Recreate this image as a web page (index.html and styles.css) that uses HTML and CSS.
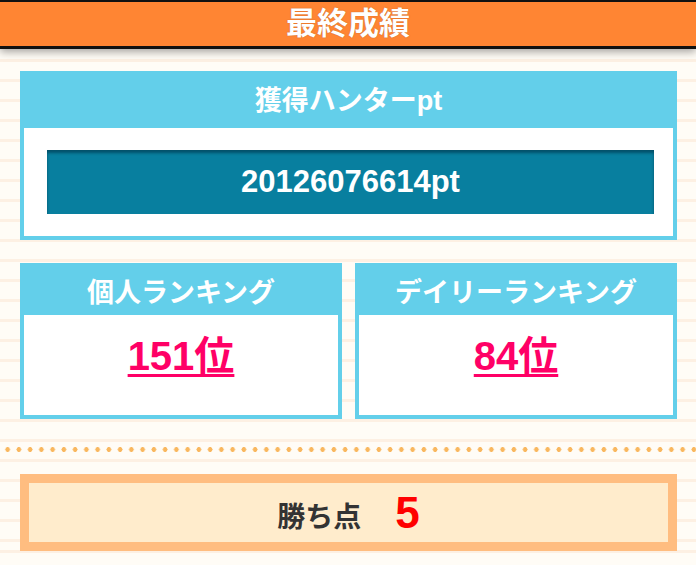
FILE: index.html
```html
<!DOCTYPE html>
<html lang="ja">
<head>
  <meta charset="UTF-8">
  <meta name="viewport" content="width=device-width, initial-scale=1.0">
  <title>最終成績</title>
  <link rel="stylesheet" href="styles.css">
</head>
<body>
  <header class="page-title">
    <h1>最終成績</h1>
  </header>

  <main class="result">
    <!-- 獲得ポイント -->
    <section class="panel">
      <h2 class="panel-head">獲得ハンターpt</h2>
      <div class="panel-body">
        <div class="point-box">20126076614pt</div>
      </div>
    </section>

    <!-- ランキング -->
    <div class="rank-row">
      <section class="panel rank">
        <h2 class="panel-head">個人ランキング</h2>
        <div class="panel-body">
          <a href="#" class="rank-num">151位</a>
        </div>
      </section>
      <section class="panel rank">
        <h2 class="panel-head">デイリーランキング</h2>
        <div class="panel-body">
          <a href="#" class="rank-num">84位</a>
        </div>
      </section>
    </div>

    <hr class="dots">

    <div class="win-point">
      <span class="win-label">勝ち点</span>
      <span class="win-value">5</span>
    </div>
  </main>
</body>
</html>
```

FILE: styles.css
```css
/* 全体 */
body {
  margin: 0;
  padding: 0;
  font-family: "Liberation Sans", "Noto Sans CJK JP", sans-serif;
  color: #333;
  background-color: #fffcf6;
  background-image: repeating-linear-gradient(
    to bottom,
    #fdf0e3 0px,
    #fdf0e3 3px,
    transparent 3px,
    transparent 20px
  );
  background-position: 0 -1px;
}

/* タイトルバー */
.page-title {
  background-color: #ff8533;
  border-top: 2px solid #111;
  border-bottom: 3px solid #111;
  box-shadow: 0 3px 8px rgba(0, 0, 0, 0.35);
  text-align: center;
}

.page-title h1 {
  margin: 0;
  height: 44px;
  line-height: 44px;
  font-size: 31px;
  font-weight: bold;
  color: #fff;
  text-shadow: 0 0 1px rgba(120, 50, 0, 0.6);
}

.result {
  width: 657px;
  margin: 22px 0 0 20px;
}

/* 青い枠のパネル */
.panel {
  border: 4px solid #63cfea;
  background-color: #63cfea;
}

.panel-head {
  margin: 0;
  height: 53px;
  line-height: 53px;
  text-align: center;
  font-size: 27px;
  font-weight: bold;
  color: #fff;
}

.panel-body {
  background-color: #fff;
  padding: 22px 19px 22px 23px;
}

.point-box {
  height: 64px;
  line-height: 64px;
  text-align: center;
  background-color: #087f9f;
  box-shadow: inset 0 3px 3px rgba(0, 50, 70, 0.6);
  font-size: 31px;
  font-weight: bold;
  color: #fff;
}

/* ランキング */
.rank-row {
  display: flex;
  gap: 13px;
  margin-top: 23px;
}

.rank {
  width: 314px;
}

.rank .panel-head {
  height: 48px;
  line-height: 52px;
}

.rank .panel-body {
  height: 100px;
  padding: 0;
  box-sizing: border-box;
  text-align: center;
  padding-top: 18px;
}

.rank-num {
  font-size: 40px;
  line-height: 46px;
  font-weight: bold;
  color: #ff0066;
  text-decoration: underline;
  text-decoration-thickness: 3px;
  text-underline-offset: 4px;
}

/* 点線 */
.dots {
  border: 0;
  height: 5px;
  margin: 28px 0 0 -20px;
  width: 696px;
  background-image: radial-gradient(circle, #f9b75e 2.2px, transparent 2.6px);
  background-size: 11.25px 5px;
  background-position: 2px 0;
}

/* 勝ち点 */
.win-point {
  margin-top: 22px;
  height: 59px;
  border: 9px solid #ffbd80;
  background-color: #ffeccc;
  display: flex;
  justify-content: center;
  align-items: center;
  gap: 34px;
}

.win-label {
  font-size: 28px;
  font-weight: bold;
  color: #333;
  padding-top: 4px;
}

.win-value {
  font-size: 44px;
  font-weight: bold;
  color: #ff0000;
}
```
